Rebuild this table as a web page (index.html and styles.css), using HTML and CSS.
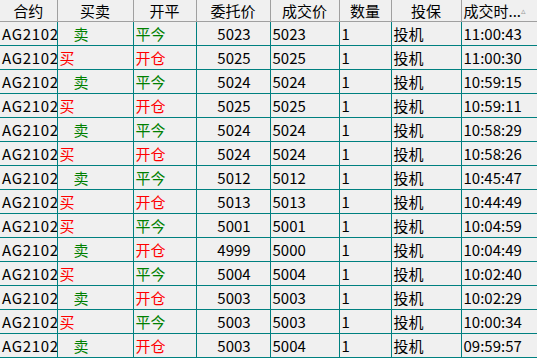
FILE: index.html
```html
<!DOCTYPE html>
<html lang="zh">
<head>
<meta charset="utf-8">
<link rel="stylesheet" href="styles.css">
</head>
<body>
<table class="grid">
<colgroup>
<col class="c1"><col class="c2"><col class="c3"><col class="c4"><col class="c5"><col class="c6"><col class="c7"><col class="c8">
</colgroup>
<thead>
<tr>
<th>合约</th><th>买卖</th><th>开平</th><th>委托价</th><th>成交价</th><th>数量</th><th>投保</th><th class="left">成交时...<span class="sort">▵</span></th>
</tr>
</thead>
<tbody>
<tr><td class="code">AG2102</td><td class="sell">卖</td><td class="g">平今</td><td class="ctr">5023</td><td>5023</td><td>1</td><td>投机</td><td>11:00:43</td></tr>
<tr><td class="code">AG2102</td><td class="buy">买</td><td class="r">开仓</td><td class="ctr">5025</td><td>5025</td><td>1</td><td>投机</td><td>11:00:30</td></tr>
<tr><td class="code">AG2102</td><td class="sell">卖</td><td class="g">平今</td><td class="ctr">5024</td><td>5024</td><td>1</td><td>投机</td><td>10:59:15</td></tr>
<tr><td class="code">AG2102</td><td class="buy">买</td><td class="r">开仓</td><td class="ctr">5025</td><td>5025</td><td>1</td><td>投机</td><td>10:59:11</td></tr>
<tr><td class="code">AG2102</td><td class="sell">卖</td><td class="g">平今</td><td class="ctr">5024</td><td>5024</td><td>1</td><td>投机</td><td>10:58:29</td></tr>
<tr><td class="code">AG2102</td><td class="buy">买</td><td class="r">开仓</td><td class="ctr">5024</td><td>5024</td><td>1</td><td>投机</td><td>10:58:26</td></tr>
<tr><td class="code">AG2102</td><td class="sell">卖</td><td class="g">平今</td><td class="ctr">5012</td><td>5012</td><td>1</td><td>投机</td><td>10:45:47</td></tr>
<tr><td class="code">AG2102</td><td class="buy">买</td><td class="r">开仓</td><td class="ctr">5013</td><td>5013</td><td>1</td><td>投机</td><td>10:44:49</td></tr>
<tr><td class="code">AG2102</td><td class="buy">买</td><td class="g">平今</td><td class="ctr">5001</td><td>5001</td><td>1</td><td>投机</td><td>10:04:59</td></tr>
<tr><td class="code">AG2102</td><td class="sell">卖</td><td class="r">开仓</td><td class="ctr">4999</td><td>5000</td><td>1</td><td>投机</td><td>10:04:49</td></tr>
<tr><td class="code">AG2102</td><td class="buy">买</td><td class="g">平今</td><td class="ctr">5004</td><td>5004</td><td>1</td><td>投机</td><td>10:02:40</td></tr>
<tr><td class="code">AG2102</td><td class="sell">卖</td><td class="r">开仓</td><td class="ctr">5003</td><td>5003</td><td>1</td><td>投机</td><td>10:02:29</td></tr>
<tr><td class="code">AG2102</td><td class="buy">买</td><td class="g">平今</td><td class="ctr">5003</td><td>5003</td><td>1</td><td>投机</td><td>10:00:34</td></tr>
<tr><td class="code">AG2102</td><td class="sell">卖</td><td class="r">开仓</td><td class="ctr">5003</td><td>5004</td><td>1</td><td>投机</td><td>09:59:57</td></tr>
</tbody>
</table>
</body>
</html>
```

FILE: styles.css
```css
html, body {
  margin: 0;
  padding: 0;
  background: #f0f0f0;
  overflow: hidden;
}
body {
  width: 537px;
  height: 358px;
  font-family: "Noto Sans CJK SC", "Noto Sans", sans-serif;
  font-size: 15px;
  color: #000;
}
.grid {
  border-collapse: collapse;
  table-layout: fixed;
  width: 538px;
}
.c1 { width: 57px; }
.c2 { width: 76px; }
.c3 { width: 63px; }
.c4 { width: 74px; }
.c5 { width: 69px; }
.c6 { width: 52px; }
.c7 { width: 70px; }
.c8 { width: 77px; }

th {
  height: 21px;
  padding: 0 2px;
  font-weight: normal;
  text-align: center;
  line-height: 21px;
  border-right: 1px solid #a0a0a0;
  border-bottom: 1px solid #a0a0a0;
  white-space: nowrap;
  overflow: hidden;
  position: relative;
}
th.left { text-align: left; }
.sort {
  position: absolute;
  right: 12px;
  top: 0;
  font-size: 9px;
  color: #9a9a9a;
}
td {
  height: 23px;
  padding: 0 0 0 2px;
  line-height: 23px;
  white-space: nowrap;
  overflow: hidden;
  text-overflow: clip;
  border-left: 1px solid #008080;
  border-bottom: 1px solid #008080;
}
td.code { border-left: none; padding-left: 2px; letter-spacing: 0.7px; }
.buy { color: #ff0000; }
.sell { color: #008000; padding-left: 16px; }
.g { color: #008000; }
.r { color: #ff0000; }
.ctr { text-align: center; }
```
